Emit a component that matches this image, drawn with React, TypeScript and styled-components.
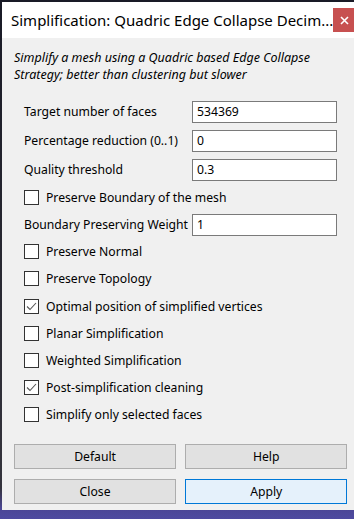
import React from 'react';
import styled, { createGlobalStyle } from 'styled-components';

const GlobalStyle = createGlobalStyle`
    html, body {
        margin: 0;
        padding: 0;
        width: 354px;
        height: 519px;
        overflow: hidden;
    }
    body {
        background: linear-gradient(to bottom, #191a26 0%, #2a2a33 60%, #35343d 94%, #4b4696 98%, #4e4aa0 100%);
        font-family: "Noto Sans", "Open Sans", sans-serif;
    }
`;

const Desktop = styled.div`
    width: 354px;
    height: 519px;
    box-sizing: border-box;
    padding: 2px 3px 9px 2px;
    display: flex;
`;

const Window = styled.div`
    flex: 1;
    display: flex;
    flex-direction: column;
    background: #f0f0f0;
    color: #000;
`;

const TitleBar = styled.div`
    height: 36px;
    flex: none;
    background: #fff;
    display: flex;
    align-items: center;
    padding-left: 9px;
    padding-right: 3px;
`;

const Title = styled.div`
    flex: 1;
    font-size: 15px;
    white-space: nowrap;
    overflow: hidden;
`;

const CloseX = styled.div`
    width: 23px;
    height: 24px;
    background: #c75050;
    display: flex;
    align-items: center;
    justify-content: center;
`;

const Description = styled.p`
    margin: 0;
    padding: 11px 12px 0 12px;
    font-size: 12.5px;
    font-style: italic;
    line-height: 17px;
    height: 48px;
`;

const Form = styled.div`
    display: flex;
    flex-direction: column;
    padding: 0 22px 0 22px;
`;

const FieldRow = styled.div<{ $h: number }>`
    height: ${p => p.$h}px;
    display: flex;
    align-items: center;
    font-size: 12.2px;
`;

const FieldLabel = styled.span`
    width: 168px;
    white-space: nowrap;
`;

const TextBox = styled.div`
    flex: 1;
    height: 22px;
    box-sizing: border-box;
    border: 1px solid #7a7a7a;
    background: #fff;
    padding-left: 4px;
    display: flex;
    align-items: center;
    font-size: 12.2px;
`;

const CheckRow = styled.div`
    height: 27.2px;
    display: flex;
    align-items: center;
    gap: 7px;
    font-size: 12.2px;
`;

const Box = styled.span`
    width: 15px;
    height: 15px;
    box-sizing: border-box;
    border: 1px solid #333;
    background: #fff;
    display: flex;
    align-items: center;
    justify-content: center;
`;

const Buttons = styled.div`
    display: grid;
    grid-template-columns: 1fr 1fr;
    column-gap: 9px;
    row-gap: 10px;
    padding: 15px 12px 0 12px;
`;

const Button = styled.div<{ $primary?: boolean }>`
    height: 25px;
    box-sizing: border-box;
    border: 1px solid ${p => (p.$primary ? '#0078d7' : '#adadad')};
    background: ${p => (p.$primary ? '#e5f1fb' : '#e1e1e1')};
    display: flex;
    align-items: center;
    justify-content: center;
    font-size: 12.2px;
`;

const Check = ({ on, label }: { on?: boolean; label: string }) => (
    <CheckRow>
        <Box>
            {on && (
                <svg width="11" height="9" viewBox="0 0 11 9">
                    <path d="M1 4.5 L4 7.5 L10 1" fill="none" stroke="#555" strokeWidth="1.1" />
                </svg>
            )}
        </Box>
        <span>{label}</span>
    </CheckRow>
);

const Field = ({ label, value, h }: { label: string; value: string; h: number }) => (
    <FieldRow $h={h}>
        <FieldLabel>{label}</FieldLabel>
        <TextBox>{value}</TextBox>
    </FieldRow>
);

export default function App() {
    return <>
        <GlobalStyle />
        <Desktop>
            <Window>
                <TitleBar>
                    <Title>Simplification: Quadric Edge Collapse Decim...</Title>
                    <CloseX>
                        <svg width="9" height="9" viewBox="0 0 9 9">
                            <path d="M1 1 L8 8 M8 1 L1 8" stroke="#fff" strokeWidth="1.6" />
                        </svg>
                    </CloseX>
                </TitleBar>
                <Description>
                    Simplify a mesh using a Quadric based Edge Collapse<br />
                    Strategy; better than clustering but slower
                </Description>
                <Form>
                    <Field label="Target number of faces" value="534369" h={29} />
                    <Field label="Percentage reduction (0..1)" value="0" h={29} />
                    <Field label="Quality threshold" value="0.3" h={29} />
                    <Check label="Preserve Boundary of the mesh" />
                    <Field label="Boundary Preserving Weight" value="1" h={27} />
                    <Check label="Preserve Normal" />
                    <Check label="Preserve Topology" />
                    <Check on label="Optimal position of simplified vertices" />
                    <Check label="Planar Simplification" />
                    <Check label="Weighted Simplification" />
                    <Check on label="Post-simplification cleaning" />
                    <Check label="Simplify only selected faces" />
                </Form>
                <Buttons>
                    <Button>Default</Button>
                    <Button>Help</Button>
                    <Button>Close</Button>
                    <Button $primary>Apply</Button>
                </Buttons>
            </Window>
        </Desktop>
    </>;
}
